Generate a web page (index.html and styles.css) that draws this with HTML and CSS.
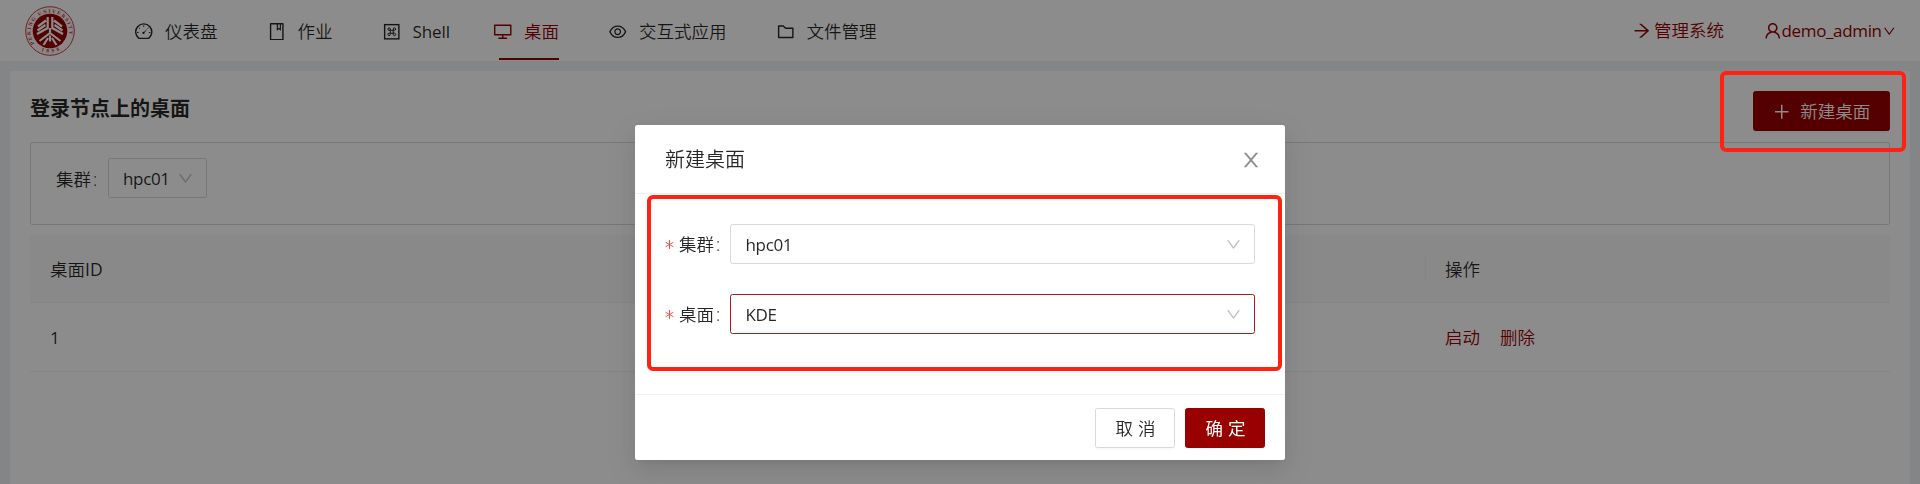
FILE: index.html
```html
<!DOCTYPE html>
<html lang="zh-CN">
<head>
<meta charset="utf-8">
<title>桌面</title>
<link rel="stylesheet" href="styles.css">
</head>
<body>
<svg class="defs" aria-hidden="true">
  <symbol id="down" viewBox="64 64 896 896"><path d="M884 256h-75c-5.1 0-9.900 2.500-12.900 6.600L512 654.200 227.900 262.600c-3-4.100-7.800-6.600-12.900-6.600h-75c-6.500 0-10.300 7.400-6.500 12.700l352.600 486.100c12.800 17.600 39 17.600 51.700 0l352.600-486.100c3.900-5.300.1-12.700-6.400-12.700z"/></symbol>
</svg>

<header class="header">
  <svg class="logo" viewBox="0 0 50 50">
    <defs>
      <path id="ring-top" d="M9.500 37.500A19.300 19.300 0 1 1 40.500 37.500"/>
      <path id="ring-bottom" d="M11 41.500A22 22 0 0 0 39 41.500"/>
    </defs>
    <circle cx="25" cy="25" r="24.300" class="logo-rim"/>
    <circle cx="25" cy="25" r="17.300" class="logo-disc"/>
    <g class="logo-mark">
      <path d="M22.700 11v11L12 28M27.300 11v11L38 28M13 20.500l8-6M37 20.500l-8-6M12.500 24.500l8-5.500M37.500 24.500l-8-5.500"/>
      <path d="M25 22v5M25 27l-10.500 8M25 27l10.500 8M23 32l-4.500 7M27 32l4.500 7M25 29.500v6"/>
    </g>
    <text class="logo-text"><textPath href="#ring-top" textLength="75">PEKING UNIVERSITY</textPath></text>
    <text class="logo-text"><textPath href="#ring-bottom" startOffset="6" textLength="19">1898</textPath></text>
  </svg>
  <nav class="nav">
    <a class="nav-item">
      <svg class="icon" viewBox="64 64 896 896"><path class="line" d="M262 850A412 412 0 1 1 762 850Z"/><path class="line thin" d="M512 190v80M262 300l54 54M762 300l-54 54M170 552h80M774 552h80M500 570L650 425"/><circle cx="496" cy="574" r="58"/></svg>
      <span>仪表盘</span>
    </a>
    <a class="nav-item">
      <svg class="icon" viewBox="64 64 896 896"><path d="M832 64H192c-17.700 0-32 14.300-32 32v832c0 17.700 14.300 32 32 32h640c17.700 0 32-14.300 32-32V96c0-17.700-14.300-32-32-32zm-260 72h96v209.900L621.500 312 572 347.400V136zm220 752H232V136h280v296.900c0 3.300 1 6.600 3 9.300a15.900 15.900 0 0022.300 3.700l83.800-59.900 81.400 59.400c2.700 2 6 3.100 9.400 3.100 8.800 0 16-7.200 16-16V136h64v752z"/></svg>
      <span>作业</span>
    </a>
    <a class="nav-item">
      <svg class="icon" viewBox="64 64 896 896"><rect class="line" x="148" y="148" width="728" height="728"/><path class="line thin" d="M436 436h152v152H436zM436 436h-62a62 62 0 1 1 62-62zM588 436v-62a62 62 0 1 1 62 62zM588 588h62a62 62 0 1 1-62 62zM436 588v62a62 62 0 1 1-62-62z"/></svg>
      <span class="latin nav-latin">Shell</span>
    </a>
    <a class="nav-item nav-active">
      <svg class="icon" viewBox="64 64 896 896"><path d="M928 140H96c-17.700 0-32 14.300-32 32v496c0 17.700 14.300 32 32 32h380v112H304c-8.800 0-16 7.200-16 16v48c0 4.400 3.600 8 8 8h432c4.400 0 8-3.600 8-8v-48c0-8.800-7.200-16-16-16H548V700h380c17.700 0 32-14.300 32-32V172c0-17.700-14.300-32-32-32zm-40 488H136V212h752v416z"/></svg>
      <span>桌面</span>
    </a>
    <a class="nav-item">
      <svg class="icon" viewBox="64 64 896 896"><path d="M942.200 486.200C847.400 286.500 704.100 186 512 186c-192.200 0-335.400 100.500-430.200 300.300a60.300 60.300 0 000 51.500C176.600 737.500 319.900 838 512 838c192.200 0 335.400-100.500 430.200-300.300 7.700-16.200 7.700-35 0-51.500zM512 766c-161.300 0-279.400-81.800-362.700-254C232.600 339.800 350.700 258 512 258c161.300 0 279.400 81.800 362.700 254C791.500 684.200 673.400 766 512 766zm-4-430c-97.200 0-176 78.800-176 176s78.800 176 176 176 176-78.800 176-176-78.800-176-176-176zm0 288c-61.900 0-112-50.100-112-112s50.100-112 112-112 112 50.100 112 112-50.100 112-112 112z"/></svg>
      <span>交互式应用</span>
    </a>
    <a class="nav-item">
      <svg class="icon" viewBox="64 64 896 896"><path d="M880 298.400H521L403.700 186.200a8.150 8.150 0 00-5.500-2.200H144c-17.700 0-32 14.300-32 32v592c0 17.700 14.300 32 32 32h736c17.700 0 32-14.300 32-32V330.400c0-17.700-14.300-32-32-32zM840 768H184V256h188.500l119.600 114.400H840V768z"/></svg>
      <span>文件管理</span>
    </a>
  </nav>
  <div class="account">
    <a class="account-link system">
      <svg class="icon" viewBox="64 64 896 896"><path d="M869 487.800L491.200 159.900c-2.900-2.500-6.600-3.900-10.500-3.900h-88.500c-7.400 0-10.800 9.200-5.200 14l350.200 304H152c-4.400 0-8 3.600-8 8v60c0 4.400 3.600 8 8 8h585.100L386.900 854c-5.600 4.900-2.200 14 5.200 14h91.500c1.900 0 3.800-.7 5.200-2L869 536.200a32.070 32.070 0 000-48.400z"/></svg>
      <span>管理系统</span>
    </a>
    <a class="account-link">
      <svg class="icon" viewBox="64 64 896 896"><path d="M858.500 763.600a374 374 0 00-80.600-119.500 375.630 375.630 0 00-119.500-80.600c-.4-.2-.8-.3-1.200-.5C719.500 518 760 444.700 760 362c0-137-111-248-248-248S264 225 264 362c0 82.700 40.500 156 102.800 201.100-.4.2-.8.3-1.200.5-44.800 18.900-85 46-119.500 80.600a375.630 375.630 0 00-80.600 119.500A371.700 371.700 0 00136 901.800a8 8 0 008 8.200h60c4.400 0 7.900-3.500 8-7.800 2-77.200 33-149.500 87.800-204.300 56.700-56.700 132-87.900 212.200-87.900s155.500 31.200 212.200 87.900C779 752.700 810 825 812 902.200c.1 4.400 3.600 7.800 8 7.800h60a8 8 0 008-8.200c-1-47.800-10.900-94.300-29.500-138.200zM512 534c-45.900 0-89.100-17.900-121.600-50.400S340 407.900 340 362c0-45.900 17.900-89.100 50.400-121.600S466.100 190 512 190s89.100 17.900 121.600 50.400S684 316.100 684 362c0 45.900-17.900 89.100-50.400 121.600S557.900 534 512 534z"/></svg>
      <span class="latin user-name">demo_admin</span>
      <svg class="icon user-arrow"><use href="#down"/></svg>
    </a>
  </div>
</header>

<main class="content">
  <div class="title-row">
    <h1 class="title">登录节点上的桌面</h1>
    <button class="button primary create">
      <svg class="icon" viewBox="64 64 896 896"><path d="M474 152h76v720h-76zM168 474h688v76H168z"/></svg>
      <span>新建桌面</span>
    </button>
  </div>
  <div class="filter">
    <span class="filter-label">集群<i class="colon">:</i></span>
    <div class="select filter-select"><span class="latin">hpc01</span><svg class="arrow"><use href="#down"/></svg></div>
  </div>
  <div class="table">
    <div class="row row-head"><div class="cell">桌面<b class="latin-strong">ID</b></div><div class="cell cell-actions">操作</div></div>
    <div class="row"><div class="cell"><span class="latin">1</span></div><div class="cell cell-actions"><a class="action">启动</a><a class="action">删除</a></div></div>
  </div>
</main>

<div class="mask">
  <section class="modal">
    <div class="modal-header">
      <span>新建桌面</span>
      <svg class="close" viewBox="64 64 896 896"><path d="M563.800 512l262.500-312.900c4.400-5.200.7-13.100-6.100-13.100h-79.800c-4.700 0-9.200 2.100-12.300 5.700L511.600 449.800 295.100 191.700c-3-3.600-7.500-5.700-12.300-5.700H203c-6.800 0-10.500 7.900-6.100 13.100L459.400 512 196.900 824.900A7.950 7.950 0 00203 838h79.800c4.700 0 9.200-2.100 12.300-5.700l216.500-258.100 216.500 258.100c3 3.600 7.500 5.700 12.300 5.700h79.800c6.800 0 10.500-7.900 6.100-13.100L563.800 512z"/></svg>
    </div>
    <div class="modal-body">
      <div class="field">
        <label class="field-label"><svg class="star" viewBox="0 0 9 9"><path d="M4.500 0v9M.6 2.250l7.800 4.500M8.400 2.250l-7.800 4.500"/></svg>集群<i class="colon">:</i></label>
        <div class="select"><span class="latin">hpc01</span><svg class="arrow"><use href="#down"/></svg></div>
      </div>
      <div class="field">
        <label class="field-label"><svg class="star" viewBox="0 0 9 9"><path d="M4.500 0v9M.6 2.250l7.800 4.500M8.400 2.250l-7.800 4.500"/></svg>桌面<i class="colon">:</i></label>
        <div class="select select-focus"><span class="latin">KDE</span><svg class="arrow"><use href="#down"/></svg></div>
      </div>
    </div>
    <div class="modal-footer">
      <button class="button spaced">取消</button>
      <button class="button primary spaced confirm">确定</button>
    </div>
    <div class="highlight highlight-form"></div>
  </section>
  <div class="highlight highlight-create"></div>
</div>
</body>
</html>
```
FILE: styles.css
```css
* { box-sizing: border-box; }

body {
  margin: 0;
  height: 484px;
  overflow: hidden;
  display: flex;
  flex-direction: column;
  background: #f0f2f5;
  color: rgba(0, 0, 0, .85);
  font-family: "Open Sans", "Noto Sans CJK SC", sans-serif;
  font-size: 17.5px;
  font-weight: 350;
  line-height: 27.5px;
}

.defs { display: none; }
.icon { width: 17.5px; height: 17.5px; flex: none; fill: currentColor; }
.line { fill: none; stroke: currentColor; stroke-width: 72; }
.thin { stroke-width: 50; }
.latin { font-size: 17px; font-weight: 400; letter-spacing: -.35px; }

.header {
  height: 61px;
  flex: none;
  display: flex;
  align-items: center;
  padding: 0 25px;
  background: #fff;
}
.logo { width: 50px; height: 50px; margin-right: 60px; flex: none; }
.logo-rim { fill: #fff4f4; stroke: #b44; stroke-width: 1; }
.logo-disc { fill: #900; }
.logo-mark { fill: none; stroke: #fff; stroke-width: 2.2; }
.logo-text { fill: #b33; font: 700 5.2px "Liberation Serif", serif; }

.nav { display: flex; gap: 50px; height: 61px; }
.nav-item { position: relative; display: flex; align-items: center; gap: 12.5px; height: 63px; white-space: nowrap; }
.nav-latin { width: 31.5px; letter-spacing: -.1px; }
.nav-active { color: #900; }
.nav-active::after { content: ""; position: absolute; left: 5px; right: 0; top: 58px; height: 2px; background: #900; }

.account { margin-left: auto; display: flex; gap: 40px; color: #900; padding-top: 1px; }
.account-link { display: flex; align-items: center; white-space: nowrap; }
.system { gap: 4px; }
.user-name { width: 101px; }
.user-arrow { width: 12.5px; height: 12.5px; }

.content { flex: 1; margin: 10px 10px 0; padding: 20px 20px 0; background: #fff; }
.title-row { display: flex; justify-content: space-between; height: 51px; }
.title { margin: 0; font-size: 20px; line-height: 36px; font-weight: 700; }

.button {
  height: 40px;
  display: flex;
  align-items: center;
  justify-content: center;
  padding: 2px 0 0;
  border: 1px solid #d9d9d9;
  border-radius: 2.5px;
  background: #fff;
  color: inherit;
  font: inherit;
  box-shadow: 0 2px 0 rgba(0, 0, 0, .02);
}
.primary { background: #900; border-color: #900; color: #fff; }
.create { width: 137px; gap: 10px; }
.spaced { width: 80px; letter-spacing: 5px; padding-left: 6px; }
.confirm { font-weight: 400; }

.filter { height: 83px; display: flex; align-items: flex-start; padding: 15px 25px; border: 1px solid #d9d9d9; border-radius: 2.5px; }
.filter-label { width: 52px; line-height: 42px; white-space: nowrap; }
.colon { font-style: normal; margin-left: 2px; }
.select { flex: 1; height: 40px; display: flex; align-items: center; justify-content: space-between; padding: 2px 13px 0 14.5px; border: 1px solid #d9d9d9; border-radius: 2.5px; background: #fff; }
.select-focus { border-color: #a61c1c; }
.filter-select { flex: none; width: 99px; padding-left: 14px; }
.arrow { width: 15px; height: 15px; fill: rgba(0, 0, 0, .25); flex: none; margin-top: -2px; }

.table { margin-top: 10px; }
.row { display: flex; height: 69px; border-bottom: 1px solid #f0f0f0; }
.row-head { height: 68px; background: #fafafa; }
.latin-strong { font-weight: 500; }
.cell { flex: 1; display: flex; align-items: center; padding: 2px 20px 0; }
.cell-actions { position: relative; flex: none; width: 465px; gap: 20px; }
.row-head .cell-actions::before { content: ""; position: absolute; left: 0; top: 19px; width: 1px; height: 28px; background: #f0f0f0; }
.action { color: #900; }

.mask { position: fixed; inset: 0; padding-top: 125px; background: rgba(0, 0, 0, .45); }
.modal {
  position: relative;
  width: 650px;
  height: 335px;
  margin: 0 auto;
  display: flex;
  flex-direction: column;
  background: #fff;
  border-radius: 2.5px;
  box-shadow: 0 4px 8px -5px rgba(0, 0, 0, .12), 0 8px 20px rgba(0, 0, 0, .08), 0 11px 35px 10px rgba(0, 0, 0, .05);
}
.modal-header { height: 69px; display: flex; align-items: center; justify-content: space-between; padding: 2px 24px 0 30px; border-bottom: 1px solid #f0f0f0; font-size: 20px; }
.close { width: 20px; height: 20px; fill: rgba(0, 0, 0, .45); }
.modal-body { flex: 1; display: flex; flex-direction: column; gap: 30px; padding: 30px; }
.field { display: flex; }
.field-label { width: 65px; display: flex; align-items: center; padding-top: 1px; white-space: nowrap; }
.star { width: 9px; height: 9px; margin-right: 5px; stroke: #ff4d4f; stroke-width: 1; fill: none; }
.modal-footer { height: 66px; display: flex; justify-content: flex-end; gap: 10px; padding: 13px 20px; border-top: 1px solid #f0f0f0; }

.highlight { position: absolute; border: 4px solid #ff2212; border-radius: 6px; }
.highlight-form { left: 11.5px; top: 69.5px; width: 635px; height: 176.5px; }
.highlight-create { left: 1719.5px; top: 70.5px; width: 186px; height: 81px; }
```
